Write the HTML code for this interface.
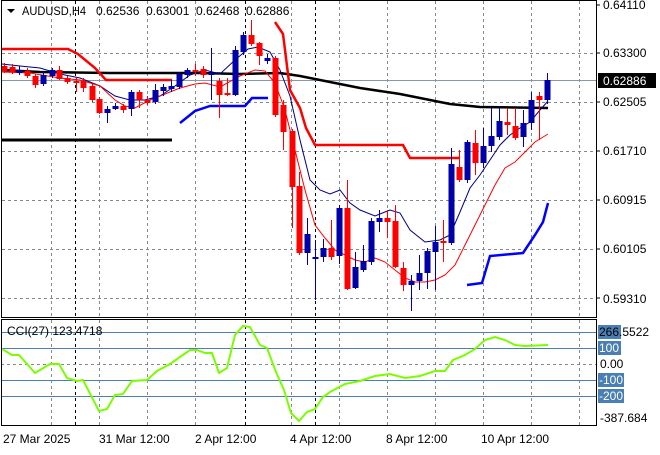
<!DOCTYPE html>
<html><head><meta charset="utf-8"><style>
body{margin:0;background:#fff;width:660px;height:450px;overflow:hidden;font-family:"Liberation Sans",sans-serif}
svg text{font-family:"Liberation Sans",sans-serif;font-size:12px;fill:#000}
</style></head><body>
<svg id="s" width="660" height="450" xmlns="http://www.w3.org/2000/svg">
<rect width="660" height="450" fill="#fff"/>
<g id="grid" stroke="#7f8a94" stroke-dasharray="3,3" stroke-width="1"></g>
<g id="vl" stroke="#000" stroke-dasharray="3,3" stroke-width="1"></g>
<line x1="1" y1="80.5" x2="596" y2="80.5" stroke="#8898a8"/>
<g stroke="#4a7fb5" stroke-width="1">
<line x1="1" y1="332.5" x2="596" y2="332.5"/><line x1="1" y1="348.5" x2="596" y2="348.5"/>
<line x1="1" y1="380.5" x2="596" y2="380.5"/><line x1="1" y1="396.5" x2="596" y2="396.5"/>
</g>
<line x1="1" y1="364.5" x2="596" y2="364.5" stroke="#7f8a94" stroke-dasharray="3,3"/>
<polyline fill="none" stroke="#000" stroke-width="3" points="2,140 172,140"/>
<polyline fill="none" stroke="#000" stroke-width="2.5" points="2,70 40,72 110,73 200,73 240,74 280,73 300,76 330,82 360,88 400,94 430,100 450,104 480,107 548,108"/>
<polyline fill="none" stroke="#f00" stroke-width="2.5" points="2,49 68,49 78,54 95,68 106,80 172,80"/>
<polyline fill="none" stroke="#f00" stroke-width="2.5" points="275,22 283,34 290,90 300,108 306,128 315,145 403,145 410,158 460,158"/>
<polyline fill="none" stroke="#00f" stroke-width="2.5" points="180,123 195,111 210,106 245,106 252,98 268,98"/>
<polyline fill="none" stroke="#00f" stroke-width="2.5" points="467,285 482,283 490,256 523,253 535,235 543,222 548,203"/>
<polyline fill="none" stroke="#000080" stroke-width="1" points="2,64 20,66 40,68 60,74 80,78 100,86 115,96 130,100 145,100 160,96 175,86 190,75 205,70 220,74 235,60 248,49 258,47 270,52 280,70 290,96 300,140 310,180 320,190 330,194 340,190 350,203 360,210 375,216 390,210 400,213 410,230 425,242 440,240 450,235 460,212 470,188 480,175 490,160 500,145 510,135 520,128 530,122 540,110 548,101"/>
<polyline fill="none" stroke="#f00" stroke-width="1" points="2,72 30,73 60,78 80,80 100,86 115,100 125,106 135,108 150,100 165,94 180,88 195,84 205,83 220,87 240,76 255,70 265,71 275,83 285,110 295,150 305,190 315,225 325,238 335,250 345,255 355,260 365,262 375,258 385,262 395,270 405,278 415,282 425,282 435,280 445,275 455,265 465,245 475,225 485,205 495,185 505,168 515,162 525,152 535,142 548,134"/>
<g id="c"></g>
<polyline fill="none" stroke="#7cfc00" stroke-width="2" points="2,349 12,355 19,355 35,373 50,364 59,364 67,378 77,381 83,380 99,411 107,409 115,395 123,394 132,381 147,380 157,371 170,364 180,357 190,350 197,350 205,353 212,353 219,373 227,368 235,335 243,326 250,327 260,345 267,348 276,372 284,390 291,413 299,421 307,412 315,409 323,397 330,392 345,384 360,381 375,376 390,374 405,378 420,376 435,371 445,371 453,360 465,355 475,349 485,340 495,337 505,340 515,345 525,346 548,345"/>
<rect x="1.5" y="0.5" width="595" height="317" fill="none" stroke="#000"/>
<rect x="1.5" y="319.5" width="595" height="106" fill="none" stroke="#000"/>
<g stroke="#000"><line x1="596" y1="5" x2="600" y2="5"/><line x1="596" y1="53" x2="600" y2="53"/><line x1="596" y1="102" x2="600" y2="102"/><line x1="596" y1="151" x2="600" y2="151"/><line x1="596" y1="200" x2="600" y2="200"/><line x1="596" y1="249" x2="600" y2="249"/><line x1="596" y1="298" x2="600" y2="298"/></g>
<path d="M7,9 L15,9 L11,13 Z" fill="#000"/>
<text x="22" y="15" textLength="64" lengthAdjust="spacingAndGlyphs">AUDUSD,H4</text>
<text x="96" y="15">0.62536</text>
<text x="146" y="15">0.63001</text>
<text x="196" y="15">0.62468</text>
<text x="246" y="15">0.62886</text>
<text x="7" y="335">CCI(27) 123.4718</text>
<g>
<text x="603" y="9">0.64110</text><text x="603" y="57">0.63300</text>
<text x="603" y="106">0.62505</text><text x="603" y="155">0.61710</text>
<text x="603" y="204">0.60915</text><text x="603" y="253">0.60105</text>
<text x="603" y="303">0.59310</text>
<rect x="598" y="73" width="58" height="15" fill="#000"/>
<text x="603" y="85" style="fill:#fff">0.62886</text>
<rect x="598" y="325" width="23" height="14" fill="#4a7fb5"/>
<rect x="598" y="341" width="23" height="14" fill="#4a7fb5"/>
<rect x="598" y="373" width="26" height="14" fill="#4a7fb5"/>
<rect x="598" y="389" width="26" height="14" fill="#4a7fb5"/>
<text x="599" y="336">266.5522</text>
<text x="599" y="352" style="fill:#fff">100</text>
<text x="600" y="368">0.00</text>
<text x="599" y="384" style="fill:#fff">-100</text>
<text x="599" y="400" style="fill:#fff">-200</text>
<text x="600" y="422">-387.684</text>
</g>
<g>
<text x="3" y="443">27 Mar 2025</text><text x="99" y="443">31 Mar 12:00</text>
<text x="195" y="443">2 Apr 12:00</text><text x="290" y="443">4 Apr 12:00</text>
<text x="386" y="443">8 Apr 12:00</text><text x="481" y="443">10 Apr 12:00</text>
</g>
</svg>
<script>
var ns="http://www.w3.org/2000/svg";
function el(p,t,a){var e=document.createElementNS(ns,t);for(var k in a)e.setAttribute(k,a[k]);p.appendChild(e);return e;}
var g=document.getElementById('grid');
[51,99,147,195,291,339,387,435,483,531,579].forEach(function(x){el(g,'line',{x1:x+.5,y1:1,x2:x+.5,y2:317});el(g,'line',{x1:x+.5,y1:320,x2:x+.5,y2:425});});
[53,102,151,200,249,298].forEach(function(y){el(g,'line',{x1:2,y1:y+.5,x2:596,y2:y+.5});});
var v=document.getElementById('vl');
[75,245,315].forEach(function(x){el(v,'line',{x1:x+.5,y1:1,x2:x+.5,y2:317});el(v,'line',{x1:x+.5,y1:320,x2:x+.5,y2:425});});
var C=[[4,66,71,63,73,'r'],[12,67,72,64,74,'r'],[19,70,73,66,75,'b'],[27,71,76,68,78,'r'],[35,76,85,74,88,'r'],[43,75,84,72,86,'b'],[52,70,76,68,78,'b'],[59,70,79,66,80,'r'],[67,78,82,76,84,'r'],[76,81,83,78,92,'r'],[83,81,88,78,92,'r'],[92,86,100,84,102,'r'],[99,99,113,97,114,'r'],[107,109,113,106,123,'b'],[115,106,109,103,110,'b'],[123,106,110,104,113,'r'],[131,92,109,90,116,'b'],[139,92,100,90,108,'r'],[147,100,103,96,105,'r'],[155,90,102,84,104,'b'],[163,87,91,84,96,'b'],[171,86,89,80,92,'b'],[179,74,87,72,89,'b'],[187,70,75,68,78,'b'],[195,70,71,64,76,'r'],[203,69,75,66,78,'r'],[211,73,75,48,100,'b'],[219,81,95,78,118,'r'],[227,93,95,78,96,'r'],[235,50,95,46,96,'b'],[243,35,52,32,55,'b'],[251,35,44,20,46,'r'],[259,43,56,42,65,'r'],[267,58,61,54,64,'b'],[275,58,115,56,117,'r'],[283,105,132,100,150,'r'],[292,131,187,129,228,'r'],[299,186,253,172,255,'r'],[307,234,253,218,265,'b'],[315,257,259,240,300,'b'],[323,248,257,239,262,'b'],[331,248,257,220,260,'r'],[339,208,256,205,264,'b'],[347,208,289,180,290,'r'],[355,267,288,252,289,'b'],[363,261,270,245,272,'b'],[371,221,262,218,265,'b'],[379,218,222,210,232,'b'],[387,218,222,210,238,'r'],[395,221,267,205,268,'r'],[403,268,285,262,291,'r'],[411,281,285,275,311,'b'],[419,273,281,255,290,'b'],[427,251,273,248,289,'b'],[435,242,252,226,290,'b'],[443,241,243,220,262,'r'],[451,164,243,148,245,'b'],[459,167,180,150,182,'r'],[467,142,180,140,183,'b'],[475,143,163,130,175,'r'],[483,146,163,128,168,'b'],[491,136,146,108,152,'b'],[499,121,137,106,140,'b'],[507,122,125,108,135,'r'],[515,126,138,108,140,'r'],[523,123,137,110,147,'b'],[531,100,123,92,130,'b'],[539,96,100,92,140,'r'],[547,80,100,73,104,'b']];
var c=document.getElementById('c');
C.forEach(function(k){var col=k[5]=='r'?'#f00':'#0000a8';
el(c,'line',{x1:k[0]+.5,y1:k[3],x2:k[0]+.5,y2:k[4],stroke:col,'stroke-width':1});
el(c,'rect',{x:k[0]-2.5,y:k[1],width:6,height:Math.max(2,k[2]-k[1]),fill:col});});
</script>
</body></html>
